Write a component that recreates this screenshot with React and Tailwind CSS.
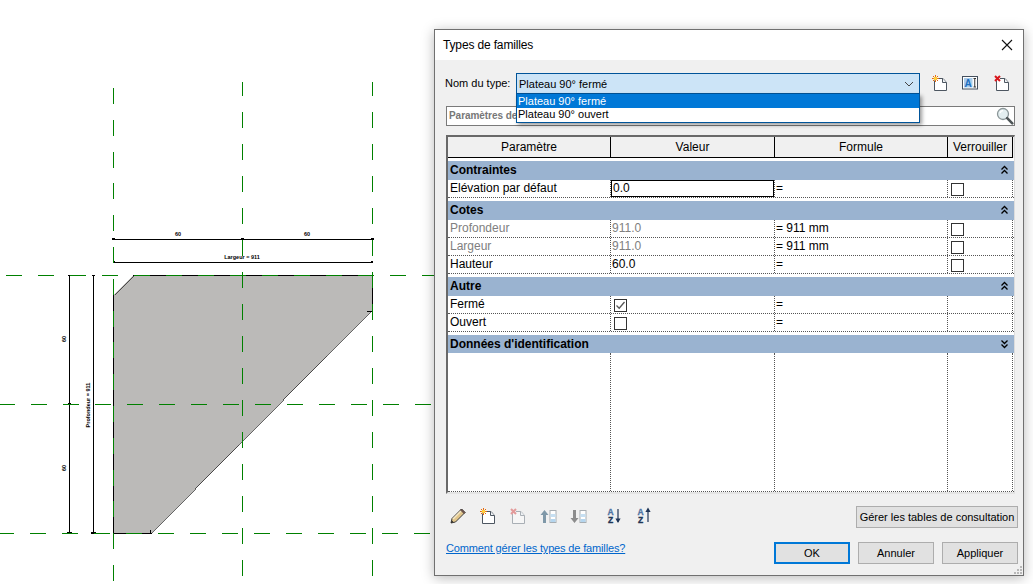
import React from "react";

const Green = (p) => <line stroke="#008000" strokeWidth="1" strokeDasharray="16 16" {...p} />;
const V_DASH = "14 16 " + Array(32).fill("16").join(" ");

function Drawing() {
  return (
    <svg className="absolute inset-0" width="1033" height="584" viewBox="0 0 1033 584">
      <g shapeRendering="crispEdges">
        <path d="M113.5 295 L133 275.5 H372.5 V310 L151.5 533.5 H113.5 Z" fill="#bbbab8" stroke="none" />
        <path d="M133 275.5 H372.5 V310 M151.5 533.5 H113.5 V295" fill="none" stroke="#000" strokeWidth="1" />
        <path d="M113.5 295 L133 275.5 M372.5 310 L151.5 533.5" fill="none" stroke="#000" strokeWidth="0.6" />
        <path d="M367 311 L372 312 M150.5 530 V533" fill="none" stroke="#000" />
        <path d="M113 239.5 H373 M113 262.5 H373 M69.5 275 V534 M93.5 275 V534" stroke="#000" fill="none" />
        <path d="M112 238 h3 v2 h-3z M241 238 h3 v2 h-3z M371 238 h3 v2 h-3z M113 261 h2 v2 h-2z M371 261 h2 v2 h-2z M68 275 h3 v1 h-3z M92 275 h3 v1 h-3z M68 403 h3 v2 h-3z M67 532 h5 v2 h-5z M91 532 h5 v2 h-5z" fill="#000" />
        <Green x1="6" y1="275.5" x2="434" y2="275.5" />
        <Green x1="-1" y1="404.5" x2="434" y2="404.5" />
        <Green x1="-2" y1="533.5" x2="434" y2="533.5" />
        <line x1="113.5" y1="88" x2="113.5" y2="582" stroke="#008000" strokeDasharray="15.9 15.9" />
        <line x1="242.5" y1="82" x2="242.5" y2="584" stroke="#008000" strokeDasharray={V_DASH} />
        <line x1="372.5" y1="82" x2="372.5" y2="584" stroke="#008000" strokeDasharray={V_DASH} />
      </g>
      <g fontFamily="'Liberation Sans', sans-serif" fontSize="5.5" fill="#000" fontWeight="700" textAnchor="middle">
        <text x="178" y="236">60</text>
        <text x="307" y="236">60</text>
        <text x="242" y="259">Largeur = 911</text>
        <text transform="translate(66 339) rotate(-90)">60</text>
        <text transform="translate(66 468) rotate(-90)">60</text>
        <text transform="translate(90 405) rotate(-90)">Profondeur = 911</text>
      </g>
    </svg>
  );
}

const Star = ({ x = 4, y = 4 }) => (
  <g>
    <path
      d={`M${x - 3.5} ${y} H${x + 3.5} M${x} ${y - 3.5} V${y + 3.5} M${x - 2.5} ${y - 2.5} L${x + 2.5} ${y + 2.5} M${x + 2.5} ${y - 2.5} L${x - 2.5} ${y + 2.5}`}
      stroke="#e5690c"
      strokeWidth="1"
    />
    <circle cx={x} cy={y} r="1.8" fill="#ffd23c" />
  </g>
);

const Page = ({ stroke = "#4d5661", fill = "#fff" }) => (
  <g fill={fill} stroke={stroke} strokeWidth="1">
    <path d="M2.5 5.5 V15.5 H14.5 V7.5 L11 3.5 H6" />
    <path d="M10.5 3.5 V7.5 H14.5" fill="#eef1f4" />
  </g>
);

const NewIcon = () => (
  <svg width="16" height="17" viewBox="0 0 16 17">
    <Page />
    <Star x={3.5} y={3.5} />
  </svg>
);

const DeleteIcon = ({ muted }) => (
  <svg width="16" height="17" viewBox="0 0 16 17">
    <Page stroke={muted ? "#a9afb5" : "#4d5661"} fill={muted ? "#f6f6f6" : "#fff"} />
    <path d="M1 1 L6 6 M6 1 L1 6" stroke={muted ? "#e39a9a" : "#d8161c"} strokeWidth="2" />
  </svg>
);

const RenameIcon = () => (
  <svg width="16" height="14" viewBox="0 0 16 14">
    <rect x="0.5" y="0.5" width="15" height="12.5" fill="#fff" stroke="#44505e" />
    <rect x="2" y="2" width="8.5" height="9.5" fill="#a9cdec" />
    <text x="6.2" y="10.5" fontSize="10" fontWeight="700" textAnchor="middle" fill="#1f6fc0" fontFamily="'Liberation Sans', sans-serif">A</text>
    <path d="M11.5 2.5 H14 M11.5 11 H14 M12.75 2.5 V11" stroke="#333" />
  </svg>
);

const SearchIcon = () => (
  <svg width="18" height="18" viewBox="0 0 18 18">
    <circle cx="7" cy="7" r="5.5" fill="#e3eef0" stroke="#8b9698" strokeWidth="1.3" />
    <path d="M4 6 A3.5 3.5 0 0 1 7 3.5" stroke="#fff" fill="none" strokeWidth="1.3" />
    <path d="M11.2 11.2 L16.3 16.3" stroke="#4e5557" strokeWidth="2.6" strokeLinecap="round" />
  </svg>
);

const Chevrons = ({ down }) => (
  <svg width="7" height="10" viewBox="0 0 7 10" className={down ? "rotate-180" : ""}>
    <path d="M0.5 4.5 L3.5 1.5 L6.5 4.5 M0.5 8.5 L3.5 5.5 L6.5 8.5" fill="none" stroke="#000" strokeWidth="1.3" />
  </svg>
);

const Pencil = () => (
  <svg width="16" height="16" viewBox="0 0 16 16">
    <path d="M1 15 L2 10.5 L11.5 1 L15 4.5 L5.5 14 Z" fill="#e2c68c" stroke="#3c3c3c" strokeWidth="1" />
    <path d="M3 11 L12 2" stroke="#f5e8c6" strokeWidth="1.4" />
    <path d="M10.5 2 L14 5.5 L15 4.5 L11.5 1 Z" fill="#8a5a52" stroke="#3c3c3c" strokeWidth="0.8" />
    <path d="M1 15 L2 12.6 L3.4 14 Z" fill="#222" />
  </svg>
);

const MoveIcon = ({ up }) => (
  <svg width="17" height="15" viewBox="0 0 17 15">
    <path d={up ? "M4.5 1 L8.5 6 H6 V14 H3 V6 H0.5 Z" : "M4.5 14 L8.5 9 H6 V1 H3 V9 H0.5 Z"} fill={up ? "#7f98a8" : "#8c8c8c"} />
    <rect x="10" y="1.5" width="6" height="12" fill="#fff" stroke="#a7adb2" />
    <rect x="10.5" y="5" width="5" height="3" fill="#c6dff2" />
    <rect x="10.5" y="10" width="5" height="3" fill="#b4d5ee" />
  </svg>
);

const SortIcon = ({ up }) => (
  <svg width="15" height="18" viewBox="0 0 15 18">
    <text x="4.5" y="7.8" fontSize="8.5" fontWeight="700" textAnchor="middle" fill="#4f73a3" stroke="#4f73a3" strokeWidth="0.3" fontFamily="'Liberation Sans', sans-serif">A</text>
    <text x="4.5" y="16.2" fontSize="8.5" fontWeight="700" textAnchor="middle" fill="#1f3557" stroke="#1f3557" strokeWidth="0.3" fontFamily="'Liberation Sans', sans-serif">Z</text>
    <path d="M12 2 V15" stroke="#1f3557" strokeWidth="1.2" />
    <path d={up ? "M12 0.5 L14.6 5 H9.4 Z" : "M12 16 L14.6 11.5 H9.4 Z"} fill="#1f3557" />
  </svg>
);

const Box = ({ checked }) => (
  <span className="block w-[13px] h-[13px] border border-[#333] bg-white">
    {checked && (
      <svg width="11" height="11" viewBox="0 0 11 11">
        <path d="M1.5 5.5 L4.2 8.2 L9.5 2" fill="none" stroke="#555" strokeWidth="1.3" />
      </svg>
    )}
  </span>
);

const COLS = "grid grid-cols-[163px_164px_173px_65px]";
const CELL = "border-r border-dotted border-[#555] flex items-center overflow-hidden";

function Row({ name, value, formula, lock, disabled, check, active }) {
  return (
    <div className={`${COLS} h-[18px] border-b border-dotted border-[#555]`}>
      <div className={`${CELL} pl-[2px] ${disabled ? "text-[#808080]" : ""}`}>{name}</div>
      <div className={`${CELL} relative ${disabled ? "text-[#808080]" : ""}`}>
        {check !== undefined ? (
          <span className="ml-[3px] mt-[2px]"><Box checked={check} /></span>
        ) : active ? (
          <div className="w-full h-[17px] border border-black bg-white pl-[1px] leading-[15px]">{value}</div>
        ) : (
          <span className="pl-[1px]">{value}</span>
        )}
      </div>
      <div className={`${CELL} pl-[1px]`}>{formula}</div>
      <div className={`${CELL} pl-[3px]`}>{lock && <span className="mt-[2px]"><Box /></span>}</div>
    </div>
  );
}

const Section = ({ title, down }) => (
  <div className="h-[19px] mt-[3px] bg-[#9ab3d0] flex items-center justify-between pl-[2px] pr-[6px] font-bold">
    <span>{title}</span>
    <Chevrons down={down} />
  </div>
);

const Btn = ({ children, primary, className = "" }) => (
  <div className={`h-[22px] flex items-center justify-center whitespace-nowrap text-[11px] bg-[#e1e1e1] ${primary ? "border-2 border-[#0078d7]" : "border border-[#adadad]"} ${className}`}>
    {children}
  </div>
);

function Dialog() {
  return (
    <div className="absolute left-[434px] top-[29px] w-[590px] h-[547px] border border-[#707070] bg-[#f0f0f0] flex flex-col shadow-[0_2px_12px_rgba(0,0,0,0.28)] text-[12px] leading-[14px] text-black">
      {/* Title bar */}
      <div className="h-[30px] bg-white flex items-center justify-between pl-[8px] pr-[8px]">
        <span className="tracking-[-0.15px]">Types de familles</span>
        <svg width="12" height="12" viewBox="0 0 12 12" className="mr-[2px]">
          <path d="M1 1 L11 11 M11 1 L1 11" stroke="#111" strokeWidth="1.1" />
        </svg>
      </div>

      {/* Type selector */}
      <div className="flex items-center mt-[13px] pl-[10px] h-[21px] relative z-10">
        <span className="w-[71px] -mt-[1px] shrink-0 whitespace-nowrap text-[11px]">Nom du type:</span>
        <div className="relative w-[404px] h-[21px] border border-[#005499] bg-[#cce4f7] flex items-center justify-between pl-[2px] pr-[5px] text-[11px]">
          <span>Plateau 90° fermé</span>
          <svg width="10" height="6" viewBox="0 0 10 6">
            <path d="M1 1 L5 5 L9 1" fill="none" stroke="#444" />
          </svg>
          <div className="absolute -left-[1px] -right-[1px] top-[20px] h-[29px] border border-t-0 border-[#005499] bg-white shadow-[2px_2px_4px_rgba(0,0,0,0.4)]">
            <div className="h-[14px] bg-[#0078d7] text-white pl-[1px] leading-[15px]">Plateau 90° fermé</div>
            <div className="h-[13px] pl-[1px] leading-[13px]">Plateau 90° ouvert</div>
          </div>
        </div>
        <div className="ml-[12px] -mt-[1px]"><NewIcon /></div>
        <div className="ml-[14px] -mt-[1px]"><RenameIcon /></div>
        <div className="ml-[16px] -mt-[1px]"><DeleteIcon /></div>
      </div>

      {/* Search */}
      <div className="ml-[11px] mt-[12px] w-[569px] h-[20px] border border-[#7a7a7a] bg-white flex items-center justify-between pl-[2px]">
        <span className="whitespace-nowrap font-bold text-[10px] tracking-[-0.05px] -mt-[1px] text-[#777]">Paramètres de</span>
        <SearchIcon />
      </div>

      {/* Table */}
      <div className="ml-[11px] mt-[9px] w-[569px] h-[359px] bg-white border-l-2 border-t-2 border-l-[#696969] border-t-[#696969] border-r border-b-2 border-r-[#dcdcdc] border-b-[#e4e4e4] flex flex-col">
        <div className={`${COLS} h-[21px] bg-[#f0f0f0] shrink-0`}>
          {["Paramètre", "Valeur", "Formule", "Verrouiller"].map((h) => (
            <div key={h} className="border-r border-b border-black flex items-center justify-center">{h}</div>
          ))}
        </div>
        <Section title="Contraintes" />
        <Row name="Elévation par défaut" value="0.0" formula="=" lock active />
        <Section title="Cotes" />
        <Row name="Profondeur" value="911.0" formula="= 911 mm" lock disabled />
        <Row name="Largeur" value="911.0" formula="= 911 mm" lock disabled />
        <Row name="Hauteur" value="60.0" formula="=" lock />
        <Section title="Autre" />
        <Row name="Fermé" check={true} formula="=" />
        <Row name="Ouvert" check={false} formula="=" />
        <Section title="Données d'identification" down />
        <div className={`${COLS} h-[139px] border-b border-dotted border-[#555]`}>
          <div className={CELL} />
          <div className={CELL} />
          <div className={CELL} />
          <div className={CELL} />
        </div>
      </div>

      {/* Tools */}
      <div className="flex items-center justify-between mt-[12px] pl-[15px] pr-[5px] h-[22px]">
        <div className="flex items-center -mt-[2px]">
          <Pencil />
          <div className="ml-[14px]"><NewIcon /></div>
          <div className="ml-[14px]"><DeleteIcon muted /></div>
          <div className="ml-[14px]"><MoveIcon up /></div>
          <div className="ml-[13px]"><MoveIcon /></div>
          <div className="ml-[19px]"><SortIcon /></div>
          <div className="ml-[15px]"><SortIcon up /></div>
        </div>
        <Btn className="w-[162px]">Gérer les tables de consultation</Btn>
      </div>

      {/* Footer */}
      <div className="flex items-start justify-between mt-[14px] pl-[11px] pr-[5px]">
        <span className="-mt-[1px] text-[11px] tracking-[-0.15px] text-[#0066cc] underline">Comment gérer les types de familles?</span>
        <div className="flex gap-[8px]">
          <Btn primary className="w-[76px]">OK</Btn>
          <Btn className="w-[76px]">Annuler</Btn>
          <Btn className="w-[76px]">Appliquer</Btn>
        </div>
      </div>

      <svg className="absolute right-0 bottom-0" width="10" height="10" viewBox="0 0 10 10">
        <path d="M7 1h2v2h-2z M4 4h2v2h-2z M7 4h2v2h-2z M1 7h2v2h-2z M4 7h2v2h-2z M7 7h2v2h-2z" fill="#b8b8b8" />
      </svg>
    </div>
  );
}

export default function App() {
  return (
    <div className="relative w-[1033px] h-[584px] overflow-hidden bg-white font-['Liberation_Sans',Arial,sans-serif]">
      <Drawing />
      <Dialog />
    </div>
  );
}
